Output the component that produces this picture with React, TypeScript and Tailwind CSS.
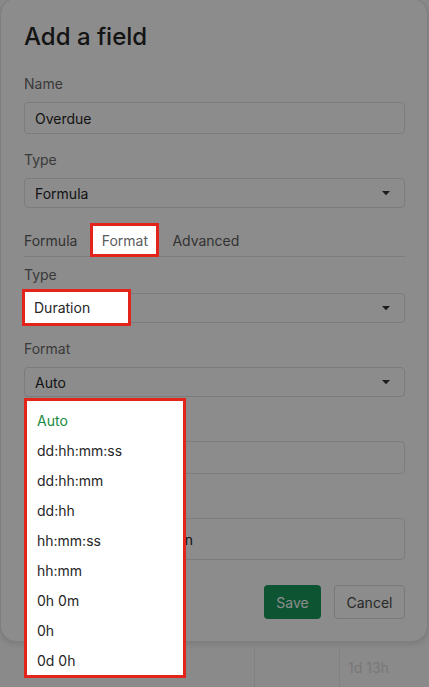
import React from "react";

const formatOptions = [
  "Auto",
  "dd:hh:mm:ss",
  "dd:hh:mm",
  "dd:hh",
  "hh:mm:ss",
  "hh:mm",
  "0h 0m",
  "0h",
  "0d 0h",
];

function Caret() {
  return (
    <svg width="10" height="6" viewBox="0 0 10 6" className="shrink-0">
      <path d="M1 1h8L5 5.2z" fill="#333333" />
    </svg>
  );
}

function Label({ children }: { children?: React.ReactNode }) {
  return <div className="h-[20px] text-[14px] leading-[20px] text-[#6b6b6b]">{children}</div>;
}

function SelectBox({ value, children }: { value?: string; children?: React.ReactNode }) {
  return (
    <div className="relative flex h-[30px] items-center justify-between rounded-[4px] border border-[#e2e2e2] bg-white pl-[10px] pr-[13px]">
      <span className="text-[14px] text-[#262626]">{value}</span>
      <Caret />
      {children}
    </div>
  );
}

export default function App() {
  return (
    <div
      className="relative h-[687px] w-[429px] overflow-hidden bg-[#fbfbfb]"
      style={{ fontFamily: "Inter, 'Noto Sans', sans-serif" }}
    >
      {/* modal card */}
      <div className="mt-[-2px] flex h-[644px] w-[428px] flex-col rounded-2xl border border-[#e6e6e6] bg-white pl-[23px] pr-[22px] pt-[22px] shadow-[0_2px_6px_rgba(0,0,0,0.12)]">
        <h1 className="text-[24px] font-medium leading-[32px] text-[#262626]">Add a field</h1>

        <div className="mt-[21px]">
          <Label>Name</Label>
          <div className="mt-[8px] flex h-[32px] items-center rounded-[4px] border border-[#e2e2e2] pl-[10px] text-[14px] text-[#262626]">
            Overdue
          </div>
        </div>

        <div className="mt-[16px]">
          <Label>Type</Label>
          <div className="mt-[8px]">
            <SelectBox value="Formula" />
          </div>
        </div>

        {/* tabs */}
        <div className="mt-[16px] flex h-[33px] items-center border-b border-[#e4e4e4] text-[14px] text-[#5c5c5c]">
          <span>Formula</span>
          <span className="relative z-20 ml-[13px] flex h-[34px] w-[69px] items-center justify-center border-[3px] border-[#e3241b] bg-white">
            Format
          </span>
          <span className="ml-[13px]">Advanced</span>
        </div>

        <div className="mt-[8px]">
          <Label>Type</Label>
          <div className="mt-[8px]">
            <SelectBox>
              <div className="absolute left-[-3px] top-[-5px] z-20 flex h-[37px] w-[109px] items-center border-[3px] border-[#e3241b] bg-white pl-[9px] text-[14px] text-[#262626]">
                Duration
              </div>
            </SelectBox>
          </div>
        </div>

        <div className="mt-[16px]">
          <Label>Format</Label>
          <div className="mt-[8px]">
            <SelectBox value="Auto">
              {/* open options menu */}
              <div className="absolute left-[-1px] top-[30px] z-20 w-[162px] border-[3px] border-[#e3241b] bg-white pt-[4px]">
                {formatOptions.map((o, i) => (
                  <div
                    key={o}
                    className={`flex h-[30px] items-center pl-[10px] text-[14px] ${
                      i === 0 ? "text-[#168a3c]" : "text-[#262626]"
                    }`}
                  >
                    {o}
                  </div>
                ))}
              </div>
            </SelectBox>
          </div>
        </div>

        <div className="mt-[16px]">
          <Label />
          <div className="mt-[8px] h-[33px] rounded-[4px] border border-[#e2e2e2]" />
        </div>

        <div className="mt-[16px]">
          <Label />
          <div className="mt-[8px] flex h-[42px] items-center rounded-[4px] border border-[#e2e2e2] pl-[12px] text-[14px] text-[#262626]">
            Overdue as a time span
          </div>
        </div>

        <div className="mt-[25px] flex justify-end gap-[13px]">
          <button className="h-[34px] w-[57px] rounded-[4px] bg-[#169a5c] text-[14px] text-white">Save</button>
          <button className="h-[34px] w-[71px] rounded-[4px] border border-[#dcdcdc] bg-white text-[14px] text-[#4b4b4b]">
            Cancel
          </button>
        </div>
      </div>

      {/* table row behind the dialog */}
      <div className="mt-[5px] flex h-[40px]">
        <div className="w-[254px]" />
        <div className="w-[85px] border-l border-[#ececec]" />
        <div className="flex items-center border-l border-[#ececec] pl-[8px] text-[14px] text-[#dadada]">1d 13h</div>
      </div>

      {/* dimming overlay */}
      <div className="absolute inset-0 z-10 bg-black/45" />
    </div>
  );
}
